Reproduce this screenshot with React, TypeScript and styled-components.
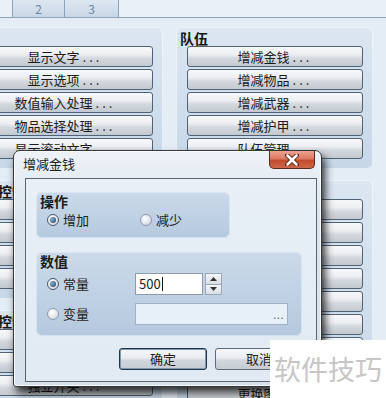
import React from "react";
import styled, { createGlobalStyle } from "styled-components";

const GlobalStyle = createGlobalStyle`
  html, body {
    margin: 0;
    padding: 0;
    overflow: hidden;
  }
`;

const font = `"Noto Sans CJK SC", "Liberation Sans", sans-serif`;

const Screen = styled.div`
  position: relative;
  width: 386px;
  height: 398px;
  overflow: hidden;
  background: #e4edf6;
  font-family: ${font};
  font-size: 13px;
  color: #1c1c1c;
`;

const TabStrip = styled.div`
  display: flex;
  height: 17px;
  padding-left: 12px;
  border-bottom: 1px solid #8da3ba;
  background: #e9f0f7;
`;

const Tab = styled.div<{ $w: number }>`
  width: ${p => p.$w}px;
  border-left: 1px solid #8da3ba;
  background: linear-gradient(#dde7f1, #c8d7e7);
  color: #7087a2;
  font-size: 12px;
  line-height: 17px;
  text-align: center;
  &:last-child {
    border-right: 1px solid #8da3ba;
  }
`;

const Columns = styled.div`
  display: grid;
  grid-template-columns: 197px 197px;
  column-gap: 13px;
  margin: 9px 0 0 -34px;
`;

const Column = styled.div`
  display: flex;
  flex-direction: column;
  gap: 11px;
`;

const Panel = styled.section`
  padding: 3px 10px 10px 4px;
  border-radius: 6px;
  background: linear-gradient(#dbe6f1, #c7d7e8);
  box-shadow: inset 0 0 0 1px rgba(255, 255, 255, 0.55);
`;

const PanelTitle = styled.div`
  height: 16px;
  font-size: 14px;
  font-weight: bold;
  line-height: 16px;
  white-space: nowrap;
  color: #141414;
`;

const ButtonList = styled.div`
  display: flex;
  flex-direction: column;
  gap: 2px;
  padding-left: 7px;
`;

const CmdButton = styled.div`
  height: 21px;
  box-sizing: border-box;
  border: 1px solid #506276;
  border-radius: 3px;
  background: linear-gradient(#f7f8fa 0%, #eceef1 40%, #d3d8de 60%, #c3c9d0 100%);
  text-align: center;
  line-height: 19px;
  font-size: 13px;
  white-space: nowrap;
  overflow: hidden;
`;

const Dots = styled.span`
  letter-spacing: 3px;
  margin-left: 3px;
`;

const Dialog = styled.div`
  position: absolute;
  left: 13px;
  top: 150px;
  width: 309px;
  height: 237px;
  box-sizing: border-box;
  display: flex;
  flex-direction: column;
  border: 1px solid #33363b;
  border-radius: 7px 7px 3px 3px;
  background: linear-gradient(#edf2f7 0%, #dce5ee 30%, #d6e0ea 100%);
  box-shadow: inset 0 0 0 1px rgba(255, 255, 255, 0.8), 3px 6px 9px rgba(0, 0, 0, 0.8);
`;

const TitleBar = styled.div`
  display: flex;
  align-items: flex-start;
  height: 27px;
`;

const DialogTitle = styled.div`
  padding: 5px 0 0 9px;
  line-height: 16px;
  font-size: 13px;
  color: #202020;
`;

const CloseButton = styled.div`
  margin-left: auto;
  margin-right: 6px;
  width: 46px;
  height: 18px;
  box-sizing: border-box;
  display: flex;
  align-items: center;
  justify-content: center;
  border: 1px solid #5a2a1e;
  border-top: none;
  border-radius: 0 0 5px 5px;
  background: linear-gradient(#eba392 0%, #dc7a62 45%, #c24a2e 55%, #d2674a 100%);
`;

const Client = styled.div`
  flex: 1;
  margin: 0 4px 4px 11px;
  padding: 13px 13px 0 10px;
  border: 1px solid #5b6570;
  background: linear-gradient(#e8eff7, #e1eaf3);
  display: flex;
  flex-direction: column;
`;

const Group = styled.div<{ $w: number }>`
  width: ${p => p.$w}px;
  box-sizing: border-box;
  border-radius: 6px;
  background: linear-gradient(#cbdaea, #b5c9de);
  box-shadow: inset 0 0 0 1px rgba(225, 235, 245, 0.7);
`;

const GroupTitle = styled.div`
  padding-left: 4px;
  font-size: 14px;
  font-weight: bold;
  line-height: 18px;
`;

const OpGroup = styled(Group)`
  padding-bottom: 10px;
  margin-bottom: 14px;
`;

const ValueGroup = styled(Group)`
  padding-bottom: 11px;
`;

const RadioRow = styled.div`
  display: flex;
  height: 16px;
  margin-top: 2px;
  padding-left: 11px;
`;

const RadioOption = styled.label<{ $w?: number }>`
  display: flex;
  align-items: center;
  gap: 4px;
  width: ${p => (p.$w ? `${p.$w}px` : "auto")};
  line-height: 16px;
  font-size: 13px;
`;

const RadioCircle = styled.span<{ $checked?: boolean }>`
  width: 12px;
  height: 12px;
  box-sizing: border-box;
  border-radius: 50%;
  border: 1px solid ${p => (p.$checked ? "#4a5a6e" : "#8d9bab")};
  background: radial-gradient(circle at 40% 35%, #ffffff, #dfe4ea 60%, #bcc5cf);
  display: flex;
  align-items: center;
  justify-content: center;
  flex-shrink: 0;
  &::after {
    content: "";
    display: ${p => (p.$checked ? "block" : "none")};
    width: 6px;
    height: 6px;
    border-radius: 50%;
    background: radial-gradient(circle at 35% 35%, #86b0dc, #1c3655);
  }
`;

const ValueGrid = styled.div`
  display: grid;
  grid-template-columns: 88px auto;
  row-gap: 8px;
  margin-top: 3px;
  padding-left: 11px;
`;

const NumberRow = styled.div`
  display: flex;
  gap: 2px;
`;

const TextBox = styled.div<{ $w: number; $tint?: boolean }>`
  width: ${p => p.$w}px;
  height: 22px;
  box-sizing: border-box;
  border: 1px solid ${p => (p.$tint ? "#a3b2c2" : "#8c9bab")};
  background: ${p => (p.$tint ? "#e7eff9" : "#ffffff")};
  display: flex;
  align-items: center;
  padding: 0 3px;
  font-size: 13px;
  line-height: 20px;
`;

const Caret = styled.span`
  width: 1px;
  height: 14px;
  background: #111;
  margin-left: 1px;
`;

const BrowseDots = styled.span`
  margin-left: auto;
  color: #666;
  font-size: 11px;
  letter-spacing: 0.5px;
  line-height: 12px;
`;

const Spin = styled.div`
  width: 17px;
  height: 22px;
  display: flex;
  flex-direction: column;
`;

const SpinHalf = styled.div`
  flex: 1;
  box-sizing: border-box;
  border: 1px solid #9aa8b6;
  background: linear-gradient(#f6f7f9, #d9dee4);
  display: flex;
  align-items: center;
  justify-content: center;
  & + & {
    border-top: none;
  }
`;

const Actions = styled.div`
  display: flex;
  justify-content: flex-end;
  gap: 8px;
  margin-top: 12px;
`;

const DlgButton = styled.div<{ $default?: boolean }>`
  width: 88px;
  height: 22px;
  box-sizing: border-box;
  border: 1px solid ${p => (p.$default ? "#243447" : "#5c6b7b")};
  border-radius: 3px;
  background: linear-gradient(#f6f7f9 0%, #eaedf0 45%, #d2d7dd 55%, #c6ccd3 100%);
  box-shadow: ${p => (p.$default ? "inset 0 0 0 1px #7f98b3" : "none")};
  text-align: center;
  line-height: 20px;
  font-size: 13px;
`;

const Watermark = styled.div`
  position: absolute;
  left: 270px;
  top: 340px;
  width: 116px;
  height: 58px;
  background: #ffffff;
  color: #c6c6c6;
  font-size: 27px;
  line-height: 58px;
  padding-left: 4px;
  box-sizing: border-box;
  white-space: nowrap;
`;

const leftPanels = [
  { title: "", items: ["显示文字", "显示选项", "数值输入处理", "物品选择处理", "显示滚动文字"] },
  { title: "流程控制", items: ["条件分歧", "循环", "中断循环", "中断事件"] },
  { title: "开关控制", items: ["开关操作", "变量操作", "独立开关", "计时器"] },
];

const rightPanels = [
  { title: "队伍", items: ["增减金钱", "增减物品", "增减武器", "增减护甲", "队伍管理"] },
  {
    title: "系统设置",
    items: ["更改窗口", "禁止存档", "禁止菜单", "禁止遇敌", "战斗BGM", "战斗ME", "胜利ME", "地图设置", "更换图块"],
  },
];

const CommandPanel: React.FC<{ title: string; items: string[] }> = ({ title, items }) => (
  <Panel>
    <PanelTitle>{title}</PanelTitle>
    <ButtonList>
      {items.map(item => (
        <CmdButton key={item}>
          {item}
          <Dots>...</Dots>
        </CmdButton>
      ))}
    </ButtonList>
  </Panel>
);

const Arrow: React.FC<{ up?: boolean }> = ({ up }) => (
  <svg width="7" height="4" viewBox="0 0 7 4">
    <path d={up ? "M0 4 L3.5 0 L7 4 Z" : "M0 0 L3.5 4 L7 0 Z"} fill="#333" />
  </svg>
);

export default function App() {
  return (
    <Screen>
      <GlobalStyle />
      <TabStrip>
        <Tab $w={51}>2</Tab>
        <Tab $w={53}>3</Tab>
      </TabStrip>
      <Columns>
        <Column>
          {leftPanels.map(p => (
            <CommandPanel key={p.items[0]} title={p.title} items={p.items} />
          ))}
        </Column>
        <Column>
          {rightPanels.map(p => (
            <CommandPanel key={p.items[0]} title={p.title} items={p.items} />
          ))}
        </Column>
      </Columns>

      <Dialog>
        <TitleBar>
          <DialogTitle>增减金钱</DialogTitle>
          <CloseButton>
            <svg width="14" height="12" viewBox="0 0 14 12">
              <path d="M2 1 L12 11 M12 1 L2 11" stroke="#5a2418" strokeWidth="4.5" strokeLinecap="round" />
              <path d="M2.5 1.5 L11.5 10.5 M11.5 1.5 L2.5 10.5" stroke="#ffffff" strokeWidth="2.6" strokeLinecap="round" />
            </svg>
          </CloseButton>
        </TitleBar>
        <Client>
          <OpGroup $w={194}>
            <GroupTitle>操作</GroupTitle>
            <RadioRow>
              <RadioOption $w={93}>
                <RadioCircle $checked />
                增加
              </RadioOption>
              <RadioOption>
                <RadioCircle />
                减少
              </RadioOption>
            </RadioRow>
          </OpGroup>
          <ValueGroup $w={266}>
            <GroupTitle>数值</GroupTitle>
            <ValueGrid>
              <RadioOption>
                <RadioCircle $checked />
                常量
              </RadioOption>
              <NumberRow>
                <TextBox $w={68}>
                  500
                  <Caret />
                </TextBox>
                <Spin>
                  <SpinHalf>
                    <Arrow up />
                  </SpinHalf>
                  <SpinHalf>
                    <Arrow />
                  </SpinHalf>
                </Spin>
              </NumberRow>
              <RadioOption>
                <RadioCircle />
                变量
              </RadioOption>
              <TextBox $w={153} $tint>
                <BrowseDots>...</BrowseDots>
              </TextBox>
            </ValueGrid>
          </ValueGroup>
          <Actions>
            <DlgButton $default>确定</DlgButton>
            <DlgButton>取消</DlgButton>
          </Actions>
        </Client>
      </Dialog>

      <Watermark>软件技巧</Watermark>
    </Screen>
  );
}
